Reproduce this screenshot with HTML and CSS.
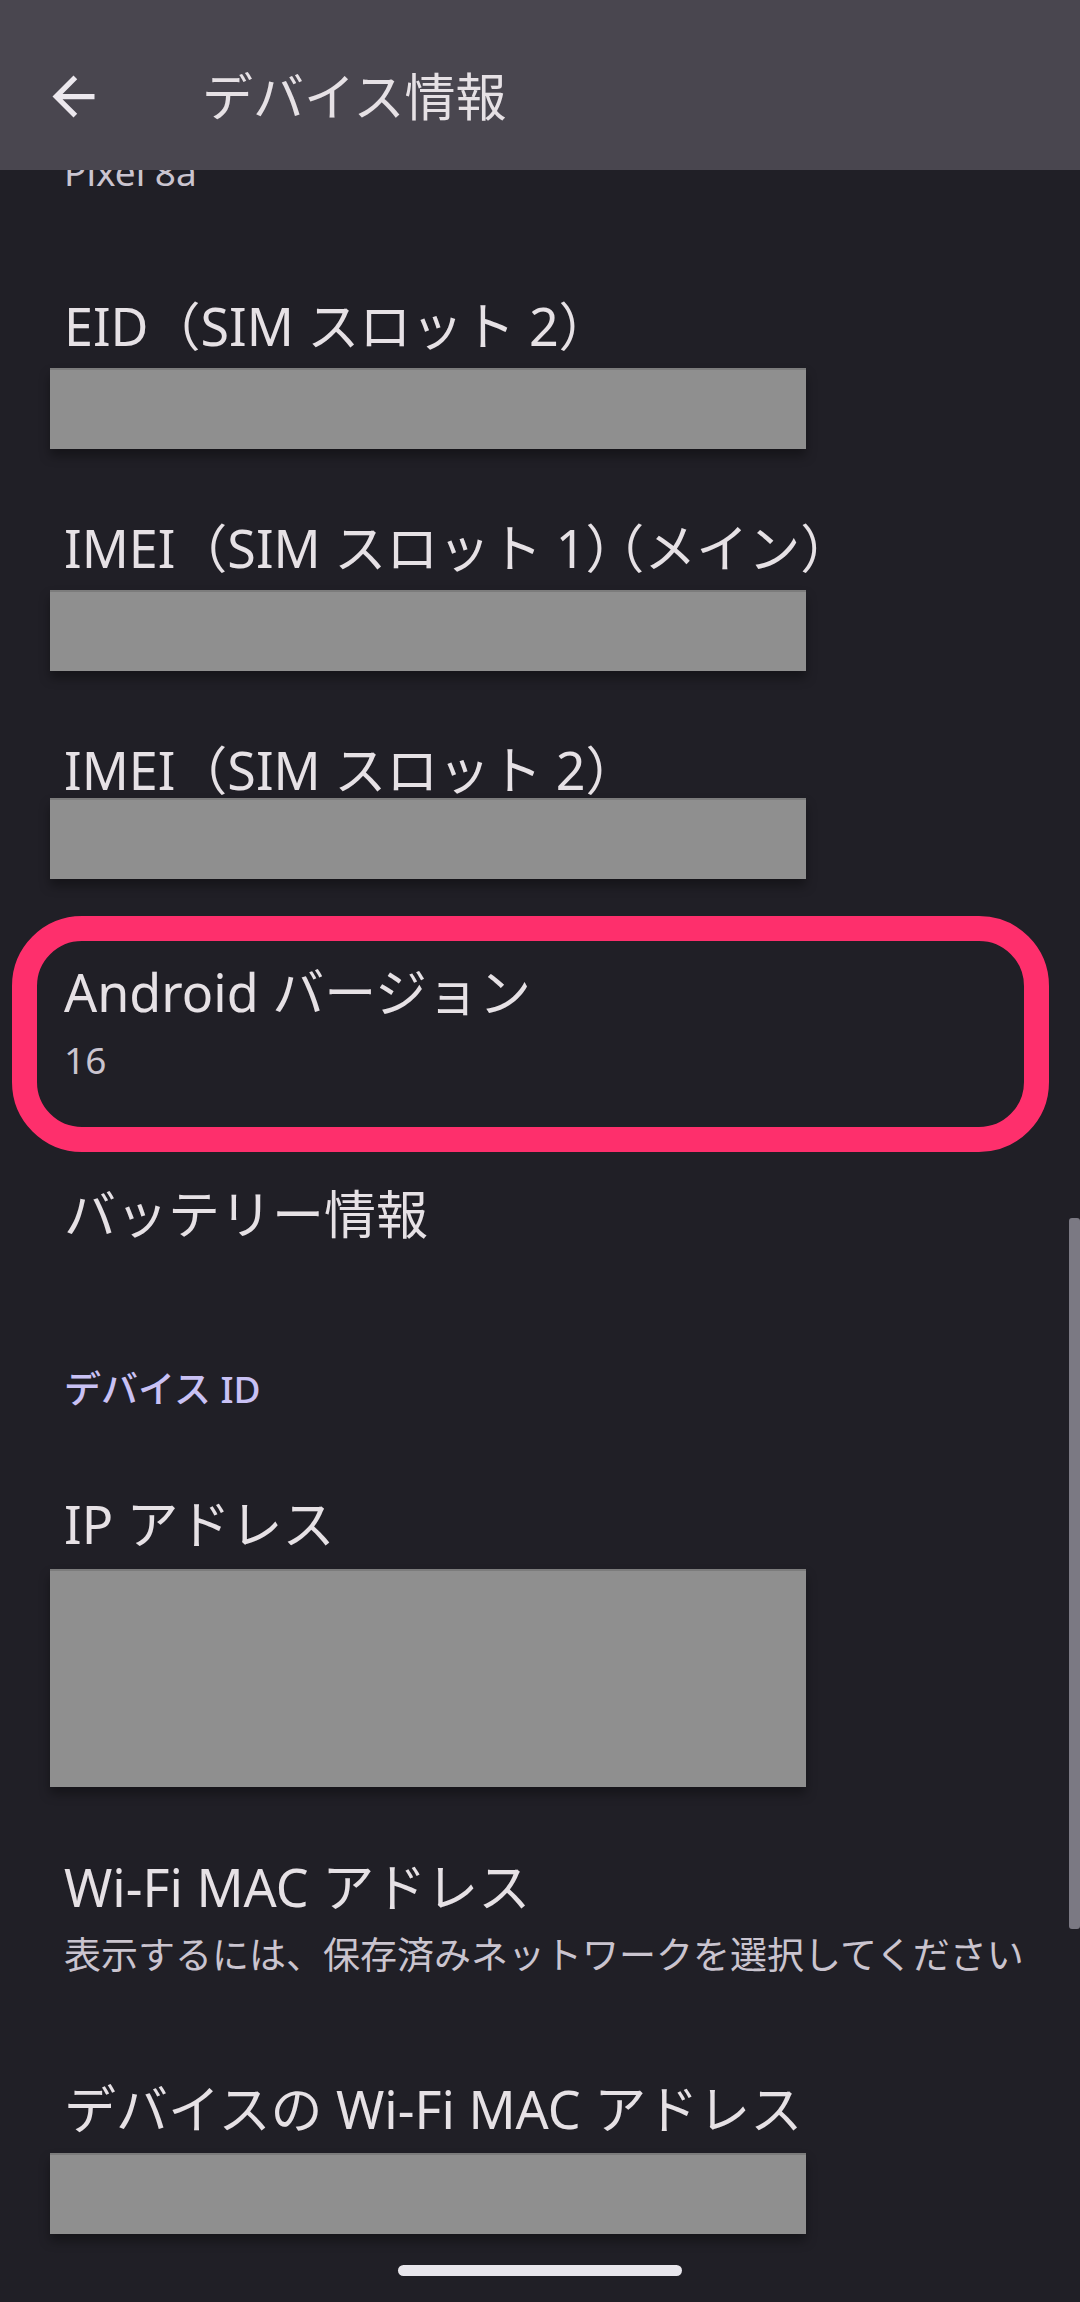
FILE: index.html
```html
<!DOCTYPE html>
<html lang="ja">
<head>
<meta charset="utf-8">
<title>デバイス情報</title>
<link rel="stylesheet" href="styles.css">
</head>
<body>
<div class="screen">
  <main class="list">
    <div class="pref">
      <div class="title spacer"></div>
      <div class="summary">Pixel 8a</div>
    </div>
    <div class="pref">
      <div class="title">EID（SIM スロット 2）</div>
      <div class="summary blank"></div>
      <div class="mask"></div>
    </div>
    <div class="pref">
      <div class="title">IMEI（SIM スロット 1<span class="tight">）</span>（メイン）</div>
      <div class="summary blank"></div>
      <div class="mask"></div>
    </div>
    <div class="pref">
      <div class="title">IMEI（SIM スロット 2）</div>
      <div class="summary blank"></div>
      <div class="mask up"></div>
    </div>
    <div class="pref">
      <div class="title">Android バージョン</div>
      <div class="summary">16</div>
      <div class="ring"></div>
    </div>
    <div class="pref">
      <div class="title">バッテリー情報</div>
    </div>
    <div class="category">デバイス ID</div>
    <div class="pref">
      <div class="title">IP アドレス</div>
      <div class="summary blank lines4"></div>
      <div class="mask tall"></div>
    </div>
    <div class="pref">
      <div class="title">Wi-Fi MAC アドレス</div>
      <div class="summary">表示するには、保存済みネットワークを選択してください</div>
    </div>
    <div class="pref">
      <div class="title">デバイスの Wi-Fi MAC アドレス</div>
      <div class="summary blank"></div>
      <div class="mask low"></div>
    </div>
  </main>

  <header class="appbar">
    <div class="appbar-row">
      <svg class="back" viewBox="0 0 24 24" aria-label="戻る">
        <path d="M20 11H7.83l5.59-5.59L12 4l-8 8 8 8 1.41-1.41L7.83 13H20v-2z"/>
      </svg>
      <div class="appbar-title">デバイス情報</div>
    </div>
  </header>

  <div class="scrollbar"></div>
  <div class="home-indicator"></div>
</div>
</body>
</html>
```

FILE: styles.css
```css
html, body {
  margin: 0;
  padding: 0;
  background: #201f26;
}

body {
  font-family: "Noto Sans", "Noto Sans CJK JP", sans-serif;
  color: #e6e1e5;
}

.screen {
  position: relative;
  width: 1080px;
  height: 2302px;
  overflow: hidden;
  background: #201f26;
}

.list {
  padding-top: 23px;
}

.pref {
  position: relative;
  padding: 46px 64px 50px;
}

.title {
  font-size: 52px;
  line-height: 70px;
  color: #e6e1e5;
  white-space: nowrap;
}

.title.spacer {
  height: 70px;
}

.tight {
  letter-spacing: -0.37em;
}

.summary {
  margin-top: 9px;
  font-size: 37px;
  line-height: 47px;
  color: #cac4cf;
  white-space: nowrap;
}

.summary.blank {
  height: 47px;
}

.summary.lines4 {
  height: 188px;
}

.mask {
  position: absolute;
  left: 50px;
  top: 123px;
  width: 756px;
  height: 81px;
  background: #8f8f8f;
  border-top: 2px solid #7c7c7c;
  box-sizing: border-box;
  box-shadow: 0 7px 10px rgba(0, 0, 0, 0.35);
}

.mask.up {
  top: 109px;
}

.mask.low {
  top: 125px;
}

.mask.tall {
  top: 126px;
  height: 218px;
}

.ring {
  position: absolute;
  left: 12px;
  top: 5px;
  width: 1037px;
  height: 236px;
  box-sizing: border-box;
  border: 25px solid #fe2f6c;
  border-radius: 70px;
}

.category {
  padding: 66px 64px 31px;
  font-size: 37px;
  line-height: 47px;
  font-weight: 500;
  color: #c9c1f4;
}

.appbar {
  position: absolute;
  top: 0;
  left: 0;
  right: 0;
  height: 170px;
  box-sizing: border-box;
  padding: 61px 0 0 42px;
  background: #49464f;
}

.appbar-row {
  display: flex;
  align-items: center;
  height: 70px;
}

.back {
  width: 63px;
  height: 63px;
  fill: #ece8ee;
  flex: none;
}

.appbar-title {
  margin-left: 97px;
  font-size: 51px;
  line-height: 70px;
  color: #e6e1e5;
}

.scrollbar {
  position: absolute;
  left: 1069px;
  top: 1218px;
  width: 11px;
  height: 711px;
  background: #7b7983;
  border-radius: 3px;
}

.home-indicator {
  position: absolute;
  left: 398px;
  top: 2265px;
  width: 284px;
  height: 11px;
  border-radius: 6px;
  background: #e8e6ec;
}
```
